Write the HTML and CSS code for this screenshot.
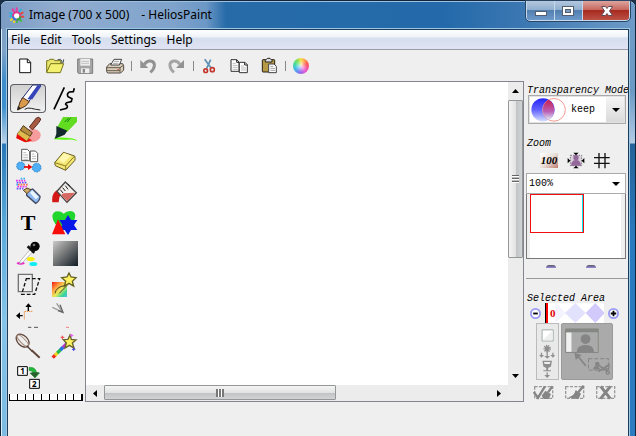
FILE: index.html
```html
<!DOCTYPE html>
<html lang="en">
<head>
<meta charset="utf-8">
<title>Image (700 x 500) - HeliosPaint</title>
<link rel="stylesheet" href="styles.css">
</head>
<body>
<div class="window">
  <header class="titlebar">
    <svg class="app-icon" viewBox="24 21 48 48" aria-hidden="true">
      <g fill="none" stroke-width="6" stroke-linecap="round">
        <path stroke="#e83ca0" d="M47 35V25M40 37l-5-9"/><path stroke="#28b4d8" d="M34 43l-7-4M34 49h-7M54 37l5-8"/>
        <path stroke="#e8d828" d="M36 55l-6 5M42 59l-3 7"/><path stroke="#48b850" d="M48 60v7M55 57l6 6"/>
        <path stroke="#e84838" d="M59 50h8M58 42l7-4"/>
      </g>
      <circle cx="47" cy="48" r="11" fill="#fff" stroke="#d83c90" stroke-width="6"/>
      <path d="M36 49a11 11 0 0 0 11 10" fill="none" stroke="#3878e0" stroke-width="6"/>
      <path d="M47 59a11 11 0 0 0 11-10" fill="none" stroke="#30a840" stroke-width="6"/>
    </svg>
    <h1 class="title"><span>Image (700 x 500)</span><span>- HeliosPaint</span></h1>
    <div class="window-buttons">
      <button class="wb" type="button" aria-label="Minimize"><svg viewBox="0 0 27 18"><rect x="8.500" y="9.500" width="11" height="4" fill="#fff" stroke="#555e6c"/></svg></button>
      <button class="wb" type="button" aria-label="Maximize"><svg viewBox="0 0 27 18"><rect x="7.500" y="4.500" width="11" height="9" fill="#fff" stroke="#555e6c"/><rect x="10.500" y="7.500" width="5" height="3" fill="#7c9cc0" stroke="#555e6c"/></svg></button>
      <button class="wb wb-close" type="button" aria-label="Close"><svg viewBox="0 0 46 18"><path d="M18.500 4.500h4l1.500 2 1.500-2h4l-3 4.500 3 4.500h-4l-1.500-2-1.500 2h-4l3-4.500z" fill="#fff" stroke="#634c55"/></svg></button>
    </div>
  </header>

  <div class="client">
    <nav class="menubar">
      <button type="button">File</button><button type="button">Edit</button><button type="button">Tools</button><button type="button">Settings</button><button type="button">Help</button>
    </nav>

    <div class="toolbar">
      <button type="button" aria-label="New"><svg viewBox="39 162 72 72"><path d="M59 177h24l9 10v31H59z" fill="#fff" stroke="#111" stroke-width="3"/><path d="M82 177v11h10" fill="none" stroke="#111" stroke-width="3"/></svg></button>
      <button type="button" aria-label="Open"><svg viewBox="126 162 72 72"><path d="M137 216v-34h6l3-4h12l4 4h18v9" fill="#e8e46c" stroke="#77751c" stroke-width="3"/><path d="M137 217l12-26h39l-10 27h-41z" fill="#f4f070" stroke="#77751c" stroke-width="3"/><path d="M170 179q9-5 14 5m-6 2l9 1 1-9" fill="none" stroke="#4c555c" stroke-width="3"/></svg></button>
      <button type="button" aria-label="Save"><svg viewBox="216 162 72 72"><path d="M230 177h45v43h-43l-2-3z" fill="#a5a5a5" stroke="#7c7c7c" stroke-width="3"/><path d="M238 177h29v20h-29z" fill="#eee"/><path d="M241 184h23m-23 6h23" stroke="#aaa" stroke-width="2"/><path d="M240 205h25v14h-25z" fill="#eee"/><path d="M245 207h7v11h-7z" fill="#888"/></svg></button>
      <button type="button" aria-label="Print"><svg viewBox="306 162 72 72"><path d="M317 201l9-10h39l3 6v13l-9 9h-39l-3-4z" fill="#d9ceb9" stroke="#514942" stroke-width="3"/><path d="M329 195l10-17h23l-7 17z" fill="#fff" stroke="#444" stroke-width="3"/><path d="M339 184h15m-18 6h16" stroke="#777" stroke-width="2"/><path d="M318 203h39l10-7m-10 7v15m-39-6h39" fill="none" stroke="#665d50" stroke-width="3"/><path d="M349 208h5" stroke="#e25040" stroke-width="3"/></svg></button>
      <span class="sep"></span>
      <button type="button" aria-label="Undo"><svg viewBox="405 162 72 72"><path d="M433 193q8-12 19-10c18 4 12 24-1 34" fill="none" stroke="#929292" stroke-width="9"/><path d="M421 180v24h24z" fill="#929292"/></svg></button>
      <button type="button" aria-label="Redo"><svg viewBox="492 162 72 72"><path d="M537 193q-8-12-19-10c-18 4-12 24 1 34" fill="none" stroke="#a5a5a5" stroke-width="9"/><path d="M549 180v24h-24z" fill="#929292"/></svg></button>
      <span class="sep"></span>
      <button type="button" aria-label="Cut"><svg viewBox="588 162 72 72"><path d="M611 178l20 27M629 179l-12 26" stroke="#5c91b2" stroke-width="5"/><circle cx="614" cy="212" r="5.500" fill="none" stroke="#c4372e" stroke-width="5"/><circle cx="634" cy="209" r="6" fill="none" stroke="#c4372e" stroke-width="5"/></svg></button>
      <button type="button" aria-label="Copy"><svg viewBox="45 162 72 72"><g fill="#fff" stroke="#333" stroke-width="3"><path d="M57 179h17l7 7v28H57z"/><path d="M82 187h17l7 7v24H82z"/></g><path d="M74 179v8h7m17 0v8h8" fill="none" stroke="#222" stroke-width="3"/><path d="M62 190h9m-9 6h15m-15 6h15m-15 6h15M87 198h9m-9 6h15m-15 6h15" stroke="#999" stroke-width="2"/></svg></button>
      <button type="button" aria-label="Paste"><svg viewBox="135 162 72 72"><rect x="151" y="179" width="37" height="37" rx="2" fill="#b69a45" stroke="#252015" stroke-width="3"/><path d="M160 186v-5l6-6h8l6 6v5z" fill="#ddd" stroke="#222" stroke-width="3"/><path d="M170 192h16l7 7v19h-23z" fill="#fff" stroke="#444" stroke-width="3"/><path d="M175 199h9m-9 6h14m-14 6h14" stroke="#777" stroke-width="2"/></svg></button>
      <span class="sep"></span>
      <button type="button" aria-label="Colors"><span class="wheel"></span></button>
    </div>

    <main class="workspace">
      <aside class="tools" aria-label="Tools">
        <div class="tool-grid">
          <button class="tool active" type="button" aria-label="Pencil"><svg viewBox="42 18 84 87"><path d="M66 62L98 21h24L84 74z" fill="#fff" stroke="#222a70" stroke-width="3"/><path d="M97 64l27-40-11-3-31 43z" fill="#3544b8"/><path d="M68 59l20 12-11 13-24 12 7-24z" fill="#d99a4c" stroke="#493019" stroke-width="3"/><path d="M51 97l3-13 9 7z" fill="#222"/><path d="M74 94q9-6 20-3t27 5" fill="none" stroke="#222" stroke-width="3"/></svg></button>
          <button class="tool" type="button" aria-label="Line"><svg viewBox="153 18 84 87"><path d="M193 28l-31 66" stroke="#000" stroke-width="5"/><path d="M223 31l-3 10-12 1q-9 5-4 14l12 6-2 9-14 3q-7 5 1 8 5 9-9 11l-12 3" fill="none" stroke="#000" stroke-width="5"/></svg></button>
          <button class="tool" type="button" aria-label="Brush"><svg viewBox="42 111 84 87"><ellipse cx="96" cy="172" rx="26" ry="20" fill="#f79c9c"/><path d="M48 180q8-8 16-11l32 18q-12 7-22 5z" fill="#f00808"/><path d="M88 147l21-27q9-6 13 3 1 5-24 32z" fill="#a55842" stroke="#5c2c20" stroke-width="3"/><path d="M70 143l27 21-7 11-29-19z" fill="#b68c40" stroke="#493519" stroke-width="3"/><path d="M60 157l30 18-10 15-29-22z" fill="#dfba4d" stroke="#7a6120" stroke-width="2"/><path d="M51 168l29 21-7 2-24-12z" fill="#e80c08"/></svg></button>
          <button class="tool" type="button" aria-label="Marker"><svg viewBox="153 111 84 87"><path d="M163 180q23-3 45 0t23 9q-12-5-29-4t-39-1z" fill="#5af80c"/><path d="M172 147l17-30h42v14l-29 30z" fill="#62dc20"/><path d="M194 132l12-12m-4 12l10-13" stroke="#178614" stroke-width="3"/><path d="M169 144l33 14-8 12-18 8-12 4 5-15z" fill="#13292b"/></svg></button>
          <button class="tool" type="button" aria-label="Clone"><svg viewBox="42 204 84 87"><g fill="#fff" stroke="#555" stroke-width="3"><path d="M65 214h17l7 7v27H65z"/><path d="M91 219h15l7 7v25H91z"/></g><path d="M70 224h8m-8 7h14m-14 7h14m-14 6h14m12-16h7m-7 7h12m-12 7h12" stroke="#999" stroke-width="2"/><g fill="#50aff4" stroke="#2581d0" stroke-width="3" stroke-dasharray="5 3"><circle cx="62" cy="264" r="12"/><circle cx="110" cy="269" r="13"/></g><path d="M72 267h14" stroke="#e80000" stroke-width="5"/><path d="M84 258l13 9-13 9z" fill="#e80000"/></svg></button>
          <button class="tool" type="button" aria-label="Eraser"><svg viewBox="153 204 84 87"><path d="M164 254l26-31 34 11q3 10 0 14l-27 29-31-14z" fill="#f4e774" stroke="#665c23" stroke-width="3"/><path d="M164 254l33 10 27-30m-27 30v13" fill="none" stroke="#8b7a26" stroke-width="3"/><path d="M174 246l19-21 20 8-22 22z" fill="#fff8ae"/></svg></button>
          <button class="tool" type="button" aria-label="Spray"><svg viewBox="42 -9 84 87"><g fill="none" stroke-width="5" stroke-dasharray="5 3"><path stroke="#e932e5" d="M48 2h28M52 20h28"/><path stroke="#6b50ff" d="M50 8h32M50 26h20"/><path stroke="#fb6e48" d="M54 14h29"/><path stroke="#3cb3ef" d="M49 14h8m5-18h14"/></g><path d="M80 34l18-7 22 22q1 12-13 21L80 46z" fill="#91b9f1" stroke="#3f4963" stroke-width="4"/><path d="M90 38l17 20 9-7-19-20z" fill="#e9f5ff"/><path d="M70 31l11-7 12 5-12 12z" fill="#cfa966" stroke="#54442c" stroke-width="3"/></svg></button>
          <button class="tool" type="button" aria-label="Fill"><svg viewBox="153 -9 84 87"><path d="M157 67q-3-24 11-35l27-9q-17 16-19 44z" fill="#d41818"/><path d="M196 6l33 32-28 29-30-33z" fill="#f2efed" stroke="#444" stroke-width="4"/><path d="M190 40l36-2-24 26-19-18z" fill="#d66862"/><path d="M181 29l8 10m-1-16l8 10m0-16l8 11m-1-17l7 8" stroke="#222" stroke-width="3"/></svg></button>
          <button class="tool" type="button" aria-label="Text"><span class="t-glyph">T</span></button>
          <button class="tool" type="button" aria-label="Shapes"><svg viewBox="153 84 84 87"><path d="M191 151q-34-18-34-43 2-14 16-14 11 0 18 7 7-7 20-8 14 1 15 14-2 26-35 44z" fill="#1ed62c"/><path d="M204 105l9 15h19l-10 15 10 15h-19l-9 15-10-15h-16l9-15-9-15h17z" fill="#0818e8"/><path d="M174 118l22 45h-40z" fill="#f80c08"/></svg></button>
          <button class="tool" type="button" aria-label="Color picker"><svg viewBox="42 177 84 87"><ellipse cx="62" cy="250" rx="12" ry="4" fill="#ed24ca"/><ellipse cx="92" cy="237" rx="12" ry="6" fill="#f5ee10"/><ellipse cx="100" cy="252" rx="12" ry="6" fill="#10ecf1"/><path d="M92 207l-31 36-3 8 9-3 33-35z" fill="#fff" stroke="#999" stroke-width="2"/><path d="M83 199l20 19" stroke="#111" stroke-width="8"/><circle cx="105" cy="199" r="14" fill="#080808"/><circle cx="102" cy="195" r="4" fill="#777"/></svg></button>
          <button class="tool" type="button" aria-label="Gradient"><span class="gradient-swatch"></span></button>
          <button class="tool" type="button" aria-label="Transform"><svg viewBox="42 12 84 87"><path d="M55 25h42v52H55z" fill="none" stroke="#737373" stroke-width="4"/><path d="M79 38h40L104 85H65z" fill="none" stroke="#111" stroke-width="4" stroke-dasharray="11 6"/></svg></button>
          <button class="tool" type="button" aria-label="Filter"><svg viewBox="153 12 84 87"><defs><linearGradient id="rainbow" x2="1" y2="1"><stop stop-color="#f11610"/><stop offset=".3" stop-color="#ff9940"/><stop offset=".55" stop-color="#edea58"/><stop offset=".8" stop-color="#37d798"/><stop offset="1" stop-color="#58b7ea"/></linearGradient></defs><path d="M156 48h45v45h-45z" fill="url(#rainbow)"/><path d="M165 82q4-20 29-23M178 82l26-27" fill="none" stroke="#464727" stroke-width="3"/><path d="M207 21l6 12 15 2-11 11 4 14-14-8-14 8 4-14-12-11 16-2z" fill="#fff260" stroke="#62601f" stroke-width="4"/></svg></button>
          <button class="tool" type="button" aria-label="Move"><svg viewBox="42 105 84 87"><path d="M97 136H73v25" fill="none" stroke="#eb8c38" stroke-width="3" stroke-dasharray="4 2"/><path d="M85 135v-12M68 149H56" stroke="#000" stroke-width="4"/><path d="M76 123h19l-10-11zM60 139v20l-12-10z"/><path d="M84 184h10m8 0h12" stroke="#555" stroke-width="3"/></svg></button>
          <button class="tool" type="button" aria-label="Warp"><svg viewBox="153 105 84 87"><path d="M157 124l30 14M170 112l17 26" stroke="#999" stroke-width="4"/><path d="M180 116l9 23-15-5" fill="none" stroke="#636363" stroke-width="4"/><path d="M198 184h9" stroke="#ef8080" stroke-width="3"/></svg></button>
          <button class="tool" type="button" aria-label="Blend"><svg viewBox="42 198 84 87"><g fill="none" stroke="#60463b" stroke-width="4"><ellipse cx="68" cy="224" rx="15" ry="23" transform="rotate(-45 68 224)"/><ellipse cx="68" cy="224" rx="7" ry="23" transform="rotate(-45 68 224)" stroke="#a58a78" stroke-width="3"/></g><path d="M80 239l18 18" stroke="#4b392f" stroke-width="4"/><path d="M95 253l24 22" stroke="#60463b" stroke-width="6"/></svg></button>
          <button class="tool" type="button" aria-label="Magic wand"><svg viewBox="153 198 84 87"><g fill="none" stroke-width="10"><path stroke="#ef2a20" d="M158 275l9-9"/><path stroke="#ecd527" d="M165 268l8-8"/><path stroke="#24b948" d="M172 261l10-10"/><path stroke="#2473dc" d="M181 252l9-9"/><path stroke="#b438cf" d="M189 244l12-12"/></g><path d="M210 207l4 13 14 2-11 9 5 15-14-8-13 8 4-15-9-10 14-1z" fill="#fff360" stroke="#69622a" stroke-width="4"/><path d="M182 214h11m-6-5v11" stroke="#ef4545" stroke-width="3"/><path d="M210 208h10m-5-4v9" stroke="#e45bf1" stroke-width="3"/><path d="M216 250h10m-5-5v10" stroke="#4444df" stroke-width="3"/></svg></button>
          <button class="tool" type="button" aria-label="Reorder"><svg viewBox="42 291 84 87"><path d="M53 302h29v26H53zM89 340h29v27H89z" fill="#fff" stroke="#000" stroke-width="3"/><text class="num" x="61" y="325">1</text><text class="num" x="96" y="363">2</text><path d="M87 304q21-2 23 17h9l-14 15-15-15h9q-2-8-12-7z" fill="#22b83c" stroke="#137021" stroke-width="1"/><path d="M99 319h19l-13 16-15-14z" fill="#2b5f2d"/></svg></button>
        </div>
        <div class="ruler" aria-hidden="true"></div>
      </aside>

      <section class="canvas-pane" aria-label="Canvas">
        <div class="canvas"></div>
        <div class="vbar">
          <button type="button" aria-label="Scroll up"><svg viewBox="0 0 7 4"><path d="M0 4l3.500-4L7 4z"/></svg></button>
          <div class="track"><div class="thumb"><i class="grip"></i></div></div>
          <button type="button" aria-label="Scroll down"><svg viewBox="0 0 7 4"><path d="M0 0h7L3.500 4z"/></svg></button>
        </div>
        <div class="hbar">
          <button type="button" aria-label="Scroll left"><svg class="side" viewBox="0 0 4 7"><path d="M4 0v7L0 3.500z"/></svg></button>
          <div class="track"><div class="thumb"><i class="grip"></i></div></div>
          <button type="button" aria-label="Scroll right"><svg class="side" viewBox="0 0 4 7"><path d="M0 0v7l4-3.500z"/></svg></button>
        </div>
      </section>

      <aside class="panel">
        <section class="group mode">
          <label class="heading" for="mode">Transparency Mode</label>
          <div class="mode-box">
            <svg class="mode-icon" viewBox="94 62 108 74" aria-hidden="true"><defs><linearGradient id="blue" x2="0" y2="1"><stop stop-color="#2424fa"/><stop offset=".5" stop-color="#6262ff"/><stop offset="1" stop-color="#d7e1ff"/></linearGradient><linearGradient id="mix" x2="0" y2="1"><stop stop-color="#c82050"/><stop offset=".6" stop-color="#bb63b8"/><stop offset="1" stop-color="#dceefa"/></linearGradient></defs><circle cx="130" cy="100" r="35" fill="url(#blue)"/><circle cx="163" cy="100" r="34" fill="none" stroke="#f39b91" stroke-width="3"/><path d="M147 70a35 35 0 0 1 0 60 35 35 0 0 1 0-60z" fill="url(#mix)"/></svg>
            <select id="mode"><option>keep</option></select>
            <svg class="arrow" viewBox="0 0 8 4" aria-hidden="true"><path d="M0 0h8L4 4z"/></svg>
          </div>
        </section>

        <section class="group zoom">
          <label class="heading" for="zoom">Zoom</label>
          <div class="zoom-buttons">
            <button type="button" aria-label="Actual size"><span class="hundred">100</span></button>
            <button type="button" aria-label="Fit to window"><svg viewBox="201 228 54 54"><path d="M211 238h34v31h-34z" fill="#dcd0df" stroke="#555" stroke-width="2" stroke-dasharray="5 3"/><circle cx="228" cy="245" r="8" fill="#936999"/><path d="M213 269q1-17 15-17t15 17z" fill="#936999"/><path d="M220 230h16l-8 8zM220 277h16l-8-8zM203 246v16l8-8zM253 246v16l-8-8z"/></svg></button>
            <button type="button" aria-label="Grid"><svg viewBox="282 228 54 54"><path d="M297 231v46m18-46v46m-33-32h47m-47 17h47" stroke="#111" stroke-width="4"/></svg></button>
          </div>
          <div class="zoom-box">
            <select id="zoom"><option>100%</option></select>
            <svg class="arrow" viewBox="0 0 8 4" aria-hidden="true"><path d="M0 0h8L4 4z"/></svg>
          </div>
          <div class="navigator"><div class="nav-page"><div class="view-rect"></div></div></div>
          <div class="knobs" aria-hidden="true"><i></i><i></i></div>
        </section>

        <section class="group selected">
          <label class="heading" for="tolerance">Selected Area</label>
          <div class="slider-row">
            <button class="round" type="button" aria-label="Decrease"><svg viewBox="0 0 12 12"><circle cx="6" cy="6" r="5" fill="#fff" stroke="#9a9af4" stroke-width="2"/><path d="M3.500 6h5" stroke="#000" stroke-width="2"/></svg></button>
            <div class="slider">
              <svg viewBox="135 0 177 60" preserveAspectRatio="none" aria-hidden="true"><path d="M135 0h177v60H135z" fill="#fff"/><path d="M166 0l32 30-32 30z" fill="#f4f4ff"/><path d="M226 0l31 30-31 30-31-30z" fill="#e2e2fc"/><path d="M286 0l28 30-28 30-29-30z" fill="#d1cafa"/></svg>
              <input id="tolerance" type="range" min="0" max="100" value="0">
              <output for="tolerance">0</output>
            </div>
            <button class="round" type="button" aria-label="Increase"><svg viewBox="0 0 12 12"><circle cx="6" cy="6" r="5" fill="#fff" stroke="#9a9af4" stroke-width="2"/><path d="M3 6h6M6 3v6" stroke="#000" stroke-width="2"/></svg></button>
          </div>
          <div class="selection">
            <button class="stack" type="button" aria-label="Drop selection"><svg viewBox="109 130 66 168"><path d="M125 146h35v35h-35z" fill="#fff" stroke="#a2aaa5" stroke-width="3"/><path d="M127 179l31-31v31z" fill="#eee"/><g fill="#8e8e8e"><circle cx="141" cy="205" r="8"/><path d="M139 213h4v15h7l-9 9-9-9h7zM121 218h4v7h6l-8 9-7-9h5zM157 218h4v7h5l-7 9-8-9h6zM126 243h30l-3 18-9 5v7h9v3h-24v-3h9v-7l-9-5zM139 280h4v8h7l-9 9-9-9h7z"/></g><circle cx="141" cy="205" r="10" fill="none" stroke="#8e8e8e" stroke-width="4" stroke-dasharray="4 3"/><path d="M131 247h20l-2 6h-16z" fill="#eee"/></svg></button>
            <button class="capture" type="button" aria-label="Cut out selection"><svg viewBox="182 133 153 162"><path d="M193 145h100v72H193z" fill="#aaa" stroke="#858882" stroke-width="3"/><path d="M193 145h100v10H193z" fill="#858882"/><path d="M195 156h16v59h-16z" fill="#f1f1f1"/><g fill="#858585"><circle cx="254" cy="176" r="15"/><path d="M227 216q1-22 27-22t26 22z"/></g><path d="M255 258l-28-34" stroke="#858585" stroke-width="5"/><path d="M220 218l22 7-18 15z" fill="#858585"/><path d="M263 236h61v35h-61z" fill="none" stroke="#858585" stroke-width="3" stroke-dasharray="12 6"/><g fill="#858585"><circle cx="290" cy="252" r="7"/><path d="M277 269q1-12 14-12l9 12z"/></g><path d="M293 275l35-21m-34 2l28 19" stroke="#858585" stroke-width="5"/><circle cx="322" cy="278" r="5" fill="none" stroke="#858585" stroke-width="4"/><circle cx="321" cy="263" r="5" fill="none" stroke="#858585" stroke-width="4"/></svg></button>
          </div>
          <div class="actions">
            <button type="button" aria-label="Apply"><svg viewBox="99 315 63 45"><path d="M104 320h54v35h-54z" fill="none" stroke="#999" stroke-width="4" stroke-dasharray="9 4"/><path d="M101 336l13 17 21-34" fill="none" stroke="#858585" stroke-width="7"/><path d="M157 319l-13 18" stroke="#858585" stroke-width="7"/><path d="M136 332l17 10-7 15h-15l-6-10z" fill="#858585"/></svg></button>
            <button type="button" aria-label="Paint"><svg viewBox="192 315 63 45"><path d="M197 320h54v35h-54z" fill="none" stroke="#999" stroke-width="4" stroke-dasharray="9 4"/><path d="M251 317l-16 20" stroke="#858585" stroke-width="7"/><path d="M227 330l16 11-7 15h-17l-14-4q18-4 22-22z" fill="#858585"/></svg></button>
            <button type="button" aria-label="Discard"><svg viewBox="285 315 63 45"><path d="M290 320h54v35h-54z" fill="none" stroke="#999" stroke-width="4" stroke-dasharray="9 4"/><path d="M302 319l29 37m0-37l-29 37" stroke="#858585" stroke-width="9"/></svg></button>
          </div>
        </section>
      </aside>
    </main>
  </div>
</div>
</body>
</html>
```
FILE: styles.css
```css
* { box-sizing: border-box; }

body {
  margin: 0;
  background: #1c3146;
  color: #000;
  font: 12px/16px "Noto Sans", sans-serif;
}

button {
  margin: 0;
  padding: 0;
  border: 0;
  background: none;
  color: inherit;
  font: inherit;
}

svg { display: block; }

.window {
  display: flex;
  flex-direction: column;
  min-height: 100vh;
  padding: 0 6px;
  border: 1px solid #10263f;
  border-bottom: 0;
  border-radius: 7px 7px 0 0;
  background:
    linear-gradient(#d9ecf8, #d9ecf8) 0 0 / 1px 100% no-repeat,
    linear-gradient(#7e9dc3 0, #7fa2c8 50px, #3f8dcb 80px, #3b8fce 105px, #bcd3e8 142px, #2776b7 143px, #57a9d9 220px, #84c4ea 320px, #7bbbe2 100%) 0 0 / 7px 100% no-repeat,
    linear-gradient(#6f9cc6 0, #6b9ac5 90px, #b3cbe4 142px, #246398 143px, #2a7abf 240px, #2b7bc0 100%) 100% 0 / 7px 100% no-repeat,
    #276ba8;
}

.titlebar {
  display: flex;
  height: 28px;
  margin: 0 -6px;
  padding-left: 8px;
  border-top: 1px solid #9fc0dc;
  border-radius: 6px 6px 0 0;
  background: linear-gradient(90deg, #7c9cc4 0, #92add0 60px, #7fa3cc 170px, #6c98c6 205px, #276ba8 225px, #246aaa 70%, #3b77b2 82%, #6e9bc8 100%);
}

.app-icon { width: 16px; height: 16px; margin-top: 5px; }

.title {
  display: flex;
  flex: 1;
  gap: 12px;
  margin: 5px 0 0 4px;
  font-size: 12px;
  line-height: 16px;
  font-weight: 400;
  white-space: nowrap;
}

.window-buttons {
  display: flex;
  height: 20px;
  margin: -1px 5px 0 0;
  border: 1px solid #c4d9ec;
  border-top: 0;
  border-radius: 0 0 4px 4px;
  outline: 1px solid #2b4768;
  overflow: hidden;
}

.wb {
  width: 28px;
  border-right: 1px solid #c4d9ec;
  background: linear-gradient(#b4c8de 0, #8faecf 48%, #527fb0 50%, #6d9aca 100%);
}
.wb svg { width: 27px; height: 18px; }
.wb-close {
  width: 46px;
  border-right: 0;
  background: linear-gradient(#dda49e 0, #c6655c 48%, #a82a20 50%, #bc5246 100%);
}
.wb-close svg { width: 46px; }

.client {
  flex: 1;
  border: 1px solid #1d3c5c;
  border-bottom: 0;
  outline: 1px solid #9cc8e4;
  background: #efefef;
}

.menubar {
  display: flex;
  gap: 10px;
  height: 20px;
  padding-left: 3px;
  border-bottom: 1px solid #9a9ca8;
  background: linear-gradient(#fff 0, #eef2f8 7px, #d5dfee 8px, #e0e3f3 100%);
}

.toolbar {
  display: flex;
  align-items: center;
  height: 31px;
  padding-left: 2px;
}
.toolbar button { display: grid; place-items: center; width: 30px; height: 24px; }
.toolbar svg { width: 24px; height: 24px; }
.sep { width: 1px; height: 10px; margin-left: 1px; background: #888; }
.wheel {
  width: 16px;
  height: 16px;
  border-radius: 50%;
  background: radial-gradient(#fffc 0, #fff0 55%), conic-gradient(#f8e04a, #f55 70deg, #e85ad8 140deg, #8c6cf0 190deg, #3fb4f0 240deg, #40dc98 290deg, #8ae04a 330deg, #f8e04a);
}

.workspace {
  display: grid;
  grid-template-columns: 77px 1fr 104px;
}

.tools { padding: 3px 2px 0 1px; }
.tool-grid {
  display: grid;
  grid-template-columns: repeat(2, 36px);
  gap: 2px 1px;
  padding-left: 1px;
}
.tool {
  display: grid;
  place-items: center;
  height: 29px;
  border-radius: 4px;
}
.tool svg { width: 28px; height: 29px; }
.tool.active {
  background: linear-gradient(#cfcfcf, #f2f2f2);
  box-shadow: inset 0 0 0 1px #5d6066;
}
.t-glyph { font: bold 22px/26px "Liberation Serif", serif; }
.gradient-swatch { width: 25px; height: 25px; background: linear-gradient(135deg, #ccc 0, #8a8a8a 35%, #111c24 100%); }
.num { font: bold 24px "Noto Sans", sans-serif; }
.ruler {
  height: 7px;
  margin: 2px 0 1px;
  border-right: 1px solid #000;
  border-bottom: 1px solid #000;
  background: repeating-linear-gradient(90deg, #000 0 1px, #fff 1px 8px);
}

.canvas-pane {
  display: grid;
  grid-template-columns: 1fr 15px;
  grid-template-rows: 1fr 16px;
  border: 1px solid #84868f;
  background: #ededed;
}
.canvas { background: #fff; }
.vbar, .hbar { display: flex; background: #ececec; }
.vbar { flex-direction: column; }
.vbar button, .hbar button { display: grid; place-items: center; flex: 0 0 18px; }
.vbar svg { width: 7px; height: 4px; }
.hbar .side { width: 4px; height: 7px; }
.track { flex: 1; }
.thumb { display: grid; place-items: center; border: 1px solid #949798; border-radius: 1px; }
.vbar .thumb { width: 15px; height: 59%; background: linear-gradient(90deg, #f4f4f4, #e3e3e3 50%, #c2c3c4 55%, #d2d3d4); }
.hbar .thumb { width: 60%; height: 15px; background: linear-gradient(#f4f4f4, #e3e3e3 50%, #c2c3c4 55%, #d2d3d4); }
.grip { width: 8px; height: 8px; }
.vbar .grip { width: 7px; background: repeating-linear-gradient(#666 0 1px, #fff 1px 2px, #bbb 2px 3px); }
.hbar .grip { background: repeating-linear-gradient(90deg, #777 0 2px, #fff 2px 3px); }

.panel { padding: 5px 0 0 2px; overflow: hidden; }
.heading {
  display: block;
  height: 9px;
  padding-left: 1px;
  font: italic 10px/9px "Liberation Mono", monospace;
  white-space: nowrap;
}
select {
  grid-area: 1 / 1;
  width: 100%;
  height: 100%;
  margin: 0;
  border: 0;
  background: none;
  color: #000;
  font: 10px/12px "Liberation Mono", monospace;
  appearance: none;
}
.arrow { grid-area: 1 / 1; justify-self: end; width: 8px; height: 4px; margin-right: 5px; pointer-events: none; }

.mode-box, .zoom-box {
  display: grid;
  align-items: center;
  margin-right: 2px;
}
.mode-box {
  height: 29px;
  margin-left: 2px;
  border: 1px solid #aaa;
  box-shadow: inset 0 0 0 1px #e2e2e2;
  background: linear-gradient(#f6f6f6, #d9d9d9) 100% 0 / 19px 100% no-repeat, #fff;
}
.mode-box select { padding-left: 42px; }
.mode-icon { grid-area: 1 / 1; width: 36px; height: 25px; margin-left: 2px; }

.zoom { padding-top: 15px; border-bottom: 1px solid #999; }
.zoom-buttons { display: flex; gap: 9px; height: 25px; margin: 0 0 0 14px; align-items: center; }
.zoom-buttons svg { width: 18px; height: 18px; }
.hundred {
  display: block;
  width: 18px;
  background: linear-gradient(135deg, #fff, #e9dfd7 50%, #c17c70);
  font: italic bold 11px/15px "Liberation Serif", serif;
  text-align: center;
}
.zoom-box { height: 21px; border: 1px solid #aaa; background: #fff; }
.zoom-box select { padding-left: 2px; }
.navigator {
  height: 65px;
  margin-right: 2px;
  padding: 0 4px 0 3px;
  border: 1px solid #777;
  border-top: 0;
}
.nav-page { height: 100%; background: #fff; }
.view-rect { width: 54px; height: 39px; border: 1px solid #f01010; box-shadow: inset -1px 0 #00eaf4; }
.knobs { display: flex; gap: 30px; height: 19px; padding: 6px 0 0 20px; }
.knobs i { width: 10px; height: 3px; border-radius: 5px 5px 0 0; background: linear-gradient(#565b62, #9d86dc); }

.selected { padding-top: 15px; }
.slider-row { display: flex; align-items: center; gap: 4px; height: 20px; padding-left: 4px; }
.round { width: 11px; height: 11px; }
.round svg { width: 11px; height: 11px; }
.slider { display: grid; width: 59px; height: 20px; align-items: center; }
.slider > * { grid-area: 1 / 1; width: 100%; height: 20px; }
.slider input { margin: 0; background: none; appearance: none; }
.slider input::-webkit-slider-thumb {
  width: 3px;
  height: 20px;
  border-left: 1px solid #000;
  background: #f00;
  appearance: none;
}
.slider output {
  padding-left: 5px;
  color: #e00000;
  font: bold 11px/20px "Liberation Serif", serif;
  pointer-events: none;
}
.selection { display: flex; gap: 2px; padding-left: 10px; }
.stack { padding: 0; border: 1px solid #bbb; background: #e9e9e9; }
.stack svg { width: 21px; height: 55px; }
.capture {
  border: 1px solid #9a9a9a;
  border-radius: 2px;
  background: #aaa;
}
.capture svg { width: 50px; height: 53px; }
.actions { display: flex; gap: 10px; padding: 5px 0 0 7px; }
.actions svg { width: 21px; height: 15px; }
```
